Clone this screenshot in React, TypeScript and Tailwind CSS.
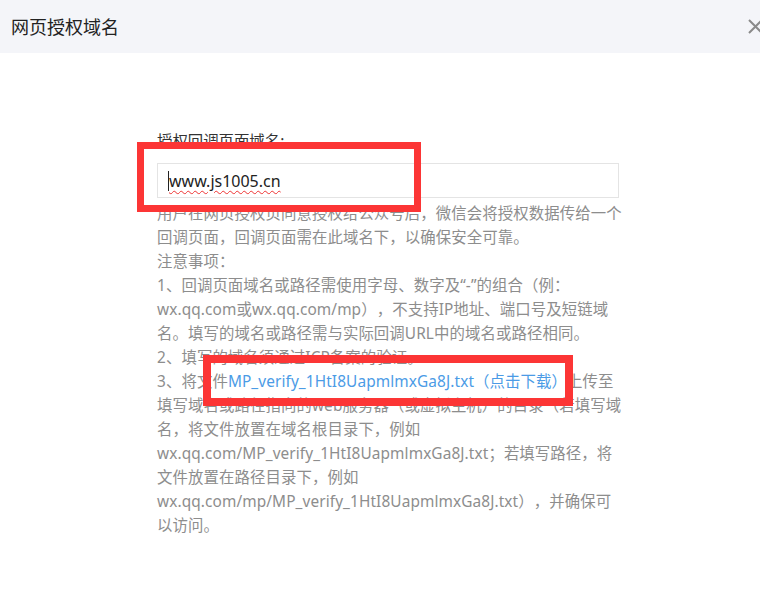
const FILE = 'MP_verify_1HtI8UapmlmxGa8J.txt';

const lines: React.ReactNode[] = [
  '用户在网页授权页同意授权给公众号后，微信会将授权数据传给一个',
  '回调页面，回调页面需在此域名下，以确保安全可靠。',
  '注意事项：',
  '1、回调页面域名或路径需使用字母、数字及“-”的组合（例：',
  'wx.qq.com或wx.qq.com/mp），不支持IP地址、端口号及短链域',
  '名。填写的域名或路径需与实际回调URL中的域名或路径相同。',
  '2、填写的域名须通过ICP备案的验证。',
  <>
    3、将文件<a className="text-[#4b9be6]">{FILE}（点击下载）</a>上传至
  </>,
  '填写域名或路径指向的web服务器（或虚拟主机）的目录（若填写域',
  '名，将文件放置在域名根目录下，例如',
  `wx.qq.com/${FILE}；若填写路径，将`,
  '文件放置在路径目录下，例如',
  `wx.qq.com/mp/${FILE}），并确保可`,
  '以访问。',
];

export default function App() {
  return (
    <div
      className="w-[760px] h-[599px] bg-white overflow-hidden [text-spacing-trim:space-all]"
      style={{ fontFamily: '"Noto Sans", "Noto Sans CJK SC", sans-serif' }}
    >
      <header className="h-[53px] bg-[#f4f5f9] flex items-center justify-between pl-[11px]">
        <h1 className="text-[18px] text-[#222] font-normal leading-none">网页授权域名</h1>
        <svg className="w-[15px] h-[15px] -mr-[3px] mt-[-1px] text-[#8a8a8a]" viewBox="0 0 15 15" fill="none" stroke="currentColor" strokeWidth="2">
          <path d="M1 1 L14 14 M14 1 L1 14" />
        </svg>
      </header>

      <main className="relative ml-[157px] mt-[77px] w-[462px]">
        <label className="block text-[15.4px] leading-[24px] text-[#333]">授权回调页面域名:</label>
        <div className="mt-[9px] h-[35px] border border-[#e4e4e4] flex items-center pl-[10px]">
          <span className="w-px h-[20px] bg-[#222]" />
          <span className="text-[16px] text-[#222] underline decoration-wavy decoration-[#e33] decoration-1 underline-offset-[3px]">
            www.js1005.cn
          </span>
        </div>
        <div className="mt-[4px] text-[15.4px] leading-[24px] tracking-[0.1px] text-[#8d8d8d] whitespace-nowrap">
          {lines.map((l, i) => (
            <p key={i}>{l}</p>
          ))}
        </div>

        {/* red annotation boxes */}
        <div className="absolute left-[-20px] top-[12px] w-[284px] h-[70px] border-[7px] border-[#fc3535]" />
        <div className="absolute left-[46px] top-[225px] w-[370px] h-[51px] border-[8px] border-[#fc3535]" />
      </main>
    </div>
  );
}
